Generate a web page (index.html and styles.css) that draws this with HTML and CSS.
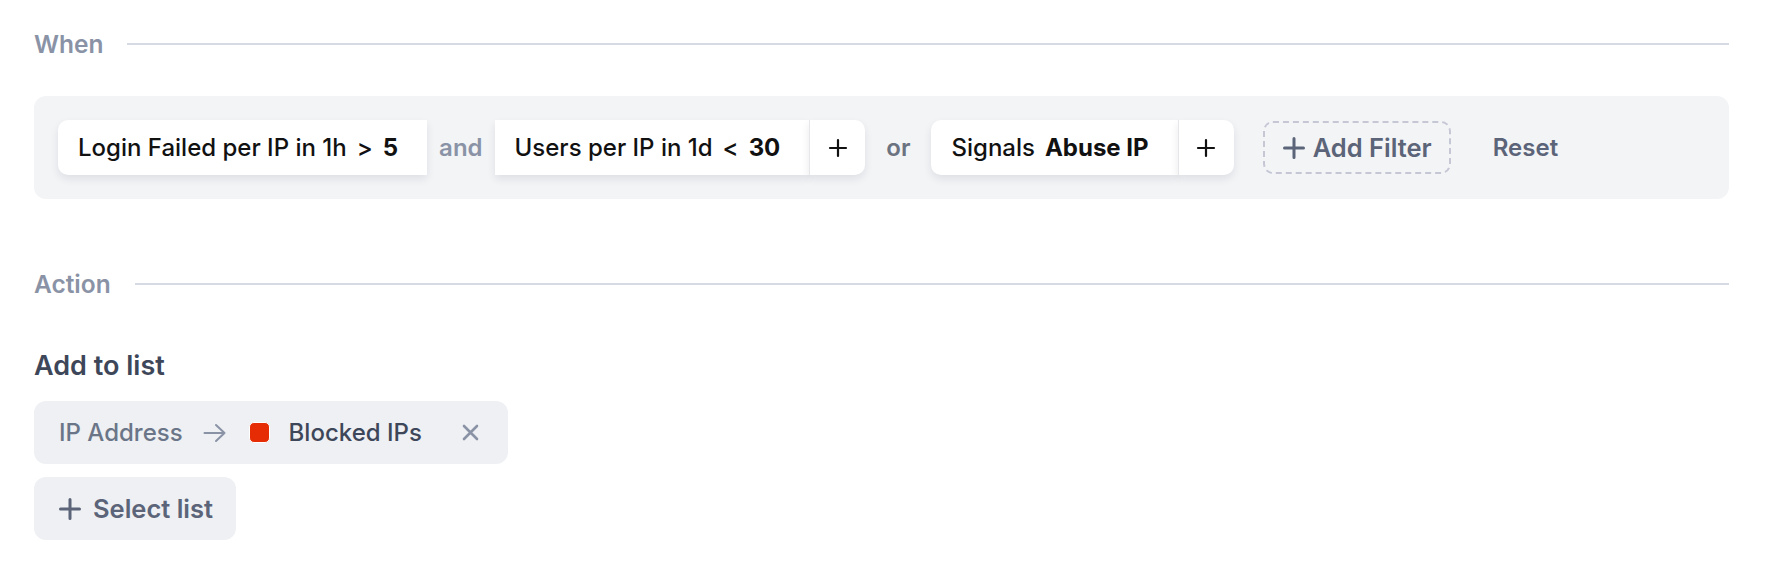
FILE: index.html
```html
<!DOCTYPE html>
<html lang="en">
<head>
<meta charset="utf-8">
<title>Rule</title>
<link rel="stylesheet" href="styles.css">
</head>
<body>
<div class="page">
  <div class="section-head">
    <span class="section-title">When</span>
    <span class="section-line"></span>
  </div>

  <div class="filter-box">
    <div class="group">
      <div class="chip chip-first">Login Failed per IP in 1h<span class="op">&gt;</span><b>5</b></div>
      <span class="join">and</span>
      <div class="chip chip-mid">Users per IP in 1d<span class="op">&lt;</span><b>30</b></div>
      <button class="chip-plus" aria-label="Add condition">
        <svg width="20" height="20" viewBox="0 0 20 20"><path d="M10 2v16M2 10h16" stroke="#111" stroke-width="2.2" stroke-linecap="round" fill="none"/></svg>
      </button>
    </div>
    <span class="join join-or">or</span>
    <div class="group">
      <div class="chip chip-first">Signals<b class="sp">Abuse IP</b></div>
      <button class="chip-plus" aria-label="Add condition">
        <svg width="20" height="20" viewBox="0 0 20 20"><path d="M10 2v16M2 10h16" stroke="#111" stroke-width="2.2" stroke-linecap="round" fill="none"/></svg>
      </button>
    </div>
    <button class="add-filter">
      <svg width="22" height="22" viewBox="0 0 22 22"><path d="M11 1.5v19M1.5 11h19" stroke="#5b6478" stroke-width="3" stroke-linecap="round" fill="none"/></svg>
      <span>Add Filter</span>
    </button>
    <button class="reset">Reset</button>
  </div>

  <div class="section-head action-head">
    <span class="section-title">Action</span>
    <span class="section-line"></span>
  </div>

  <div class="sub-title">Add to list</div>

  <div class="list-pill">
    <span class="pill-source">IP Address</span>
    <svg class="pill-arrow" width="24" height="20" viewBox="0 0 24 20"><path d="M1.5 10h20M13 2l8.5 8-8.5 8" stroke="#8a93a6" stroke-width="2" stroke-linecap="round" stroke-linejoin="round" fill="none"/></svg>
    <span class="swatch"></span>
    <span class="pill-name">Blocked IPs</span>
    <svg class="pill-x" width="17" height="17" viewBox="0 0 17 17"><path d="M2 2l13 13M15 2L2 15" stroke="#8a93a6" stroke-width="2.6" stroke-linecap="round" fill="none"/></svg>
  </div>

  <button class="select-list">
    <svg width="22" height="22" viewBox="0 0 22 22"><path d="M11 1.5v19M1.5 11h19" stroke="#5b6478" stroke-width="3" stroke-linecap="round" fill="none"/></svg>
    <span>Select list</span>
  </button>
</div>
</body>
</html>
```

FILE: styles.css
```css
* { box-sizing: border-box; }

html, body {
  margin: 0;
  background: #ffffff;
}

body {
  font-family: Inter, "Noto Sans", "Liberation Sans", sans-serif;
  font-size: 24px;
  color: #111;
}

button {
  font-family: inherit;
  font-size: inherit;
  border: none;
  background: none;
  padding: 0;
  margin: 0;
  cursor: pointer;
}

.page {
  padding: 26px 37px 0 34px;
}

.section-head {
  display: flex;
  align-items: center;
  gap: 24px;
  height: 36px;
}

.section-title {
  font-size: 24.5px;
  font-weight: 600;
  line-height: 36px;
  color: #8a93a6;
}

.section-line {
  flex: 1;
  height: 2px;
  background: #d6dae2;
}

.filter-box {
  margin-top: 34px;
  background: #f3f4f6;
  border-radius: 12px;
  padding: 24px;
  display: flex;
  align-items: center;
}

.group {
  display: flex;
  align-items: center;
}

.chip {
  height: 55px;
  display: flex;
  align-items: center;
  background: #fff;
  padding: 0 29px 0 20px;
  font-weight: 500;
  color: #111;
  white-space: nowrap;
  box-shadow: 0 4px 8px rgba(16, 24, 40, 0.09);
}

.chip b {
  font-weight: 700;
}

.chip .op {
  margin: 0 10px;
}

.chip .sp {
  margin-left: 10px;
}

.chip-first {
  border-radius: 10px 0 0 10px;
}

.chip-mid {
  border-radius: 0;
}

.chip-plus {
  height: 55px;
  width: 56px;
  display: flex;
  align-items: center;
  justify-content: center;
  background: #fff;
  border-left: 1px solid #e6e7eb;
  border-radius: 0 10px 10px 0;
  box-shadow: 0 4px 8px rgba(16, 24, 40, 0.09);
}

.join {
  font-weight: 600;
  color: #8a93a6;
  padding: 0 12px;
  line-height: 55px;
}

.join-or {
  color: #6b7280;
  padding: 0 21px;
}

.add-filter {
  margin-left: 29px;
  height: 53px;
  display: flex;
  align-items: center;
  gap: 8px;
  padding: 0 17px 0 18px;
  border: 2px dashed #c5c7d5;
  border-radius: 10px;
  color: #5b6478;
  font-size: 25.5px;
  font-weight: 600;
}

.reset {
  margin-left: 42px;
  color: #5b6478;
  font-weight: 600;
}

.action-head {
  margin-top: 67px;
}

.sub-title {
  margin-top: 46px;
  font-size: 27px;
  font-weight: 600;
  line-height: 36px;
  color: #3e4759;
}

.list-pill {
  margin-top: 17px;
  height: 63px;
  display: inline-flex;
  align-items: center;
  background: #eef0f3;
  border-radius: 12px;
  padding: 0 29px 0 25px;
}

.pill-source {
  color: #6b7588;
  font-weight: 500;
}

.pill-arrow {
  margin-left: 20px;
}

.swatch {
  margin-left: 22px;
  width: 21px;
  height: 21px;
  border-radius: 5px;
  background: #e62c05;
  border: 1.5px solid #fff;
}

.pill-name {
  margin-left: 19px;
  color: #3e4759;
  font-weight: 500;
}

.pill-x {
  margin-left: 40px;
}

.select-list {
  margin-top: 13px;
  height: 63px;
  display: flex;
  align-items: center;
  gap: 12px;
  background: #eef0f3;
  border-radius: 12px;
  padding: 0 23px 0 25px;
  color: #5b6478;
  font-size: 25.5px;
  font-weight: 600;
}
```
